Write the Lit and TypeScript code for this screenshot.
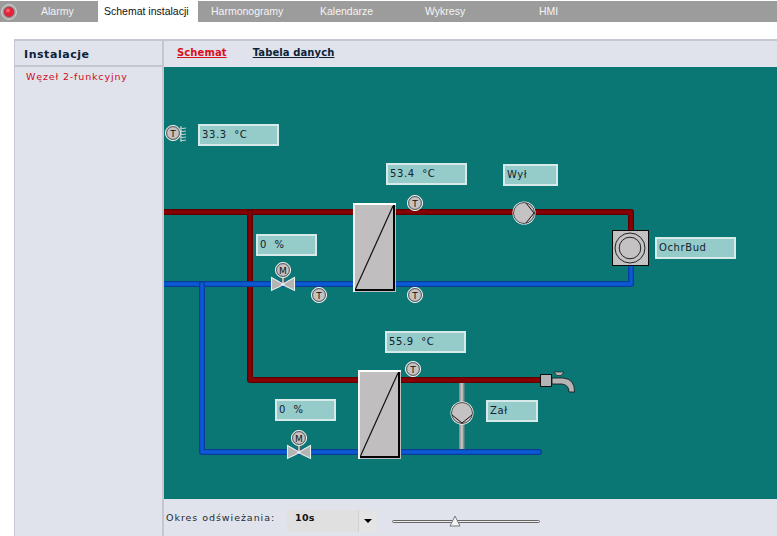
import { LitElement, html, css, svg } from "lit";
import { customElement } from "lit/decorators.js";

const TABS = [
  { t: "Alarmy", w: 68, p: 11 },
  { t: "Schemat instalacji", w: 100, p: 6, active: true },
  { t: "Harmonogramy", w: 109, p: 13 },
  { t: "Kalendarze", w: 105, p: 13 },
  { t: "Wykresy", w: 114, p: 13 },
  { t: "HMI", w: 100, p: 13 },
];
const VALUES = [
  { t: "33.3  °C", x: 198, y: 124, w: 81 },
  { t: "53.4  °C", x: 386, y: 163, w: 81 },
  { t: "Wył", x: 503, y: 164, w: 55 },
  { t: "0  %", x: 256, y: 234, w: 61 },
  { t: "OchrBud", x: 655, y: 237, w: 81 },
  { t: "55.9  °C", x: 385, y: 331, w: 81 },
  { t: "0  %", x: 275, y: 399, w: 61 },
  { t: "Zał", x: 486, y: 400, w: 52 },
];
const OX = 164, OY = 67;

const pipe = (d: string, dark: string, main: string) => svg`
  <path d=${d} fill="none" stroke=${dark} stroke-width="6" stroke-linejoin="round" stroke-linecap="round"/>
  <path d=${d} fill="none" stroke=${main} stroke-width="3.4" stroke-linejoin="round" stroke-linecap="round"/>`;

const badge = (x: number, y: number, l: string) => svg`
  <circle cx=${x} cy=${y} r="7.6" fill="#c4c2c2" stroke="#e8efee" stroke-width="1"/>
  <circle cx=${x} cy=${y} r="6.4" fill="none" stroke="#222" stroke-width="0.7"/>
  <text x=${x} y=${y + 3.5} text-anchor="middle" class="bl">${l}</text>`;

const exchanger = (x: number, y: number) => svg`
  <rect x=${x} y=${y} width="43" height="89" fill="#c0bebe"/>
  <path d="M${x} ${y + 1}H${x + 43}" stroke="#fff" stroke-width="2"/>
  <path d="M${x + 1} ${y}V${y + 89}" stroke="#f2f2f2" stroke-width="2"/>
  <path d="M${x + 41} ${y + 2}V${y + 87}H${x + 2}" fill="none" stroke="#050505" stroke-width="2"/>
  <path d="M${x + 2.5} ${y + 86}L${x + 40} ${y + 3}" stroke="#111" stroke-width="1.2"/>`;

const valve = (x: number, y: number) => svg`
  <rect x=${x - 1.5} y=${y - 8} width="3" height="8" fill="#b4b4b4" stroke="#333" stroke-width="0.5"/>
  <path d="M${x - 11.5} ${y - 6.5}L${x + 1} ${y + 0.5}L${x - 11.5} ${y + 6.5}Z M${x + 11.5} ${y - 6.5}L${x - 1} ${y + 0.5}L${x + 11.5} ${y + 6.5}Z"
    fill="#b4b4b4" stroke="#e6eeee" stroke-width="1.1"/>`;

const pump = (x: number, y: number, down: boolean) => svg`
  <circle cx=${x} cy=${y} r="11.5" fill="#fff"/>
  <circle cx=${x} cy=${y} r="10.5" fill="#c4c2c2" stroke="#222" stroke-width="0.8"/>
  <path d=${down ? `M${x - 10} ${y + 2}L${x} ${y + 10}L${x + 10} ${y + 2}` : `M${x + 2} ${y - 10}L${x + 10} ${y}L${x + 2} ${y + 10}`}
    fill="none" stroke="#111" stroke-width="1"/>`;

@customElement("app-root")
export class AppRoot extends LitElement {
  static styles = css`
    :host { display: block; width: 777px; height: 536px; overflow: hidden; background: #fff; font-family: "DejaVu Sans", Verdana, sans-serif; }
    .tabs { display: flex; height: 21px; margin-top: 1px; background: #9c9c9c; }
    .dot { width: 30px; flex: none; display: flex; align-items: center; padding-left: 1px; box-sizing: border-box; }
    .tab { flex: none; box-sizing: border-box; font: 10.5px/21px "Liberation Sans", Arial, sans-serif; color: #f4f4f4; white-space: nowrap; }
    .tab.active { background: #fff; color: #111; height: 22px; margin-top: -1px; line-height: 23px; }
    .panel { margin: 17px 0 0 14px; height: 497px; box-sizing: border-box; display: grid; grid-template-columns: 149px 1fr; border-top: 2px solid #c5c7d0; border-left: 1px solid #c5c7d0; background: #e0e3ec; }
    .side { border-right: 2px solid #c5c7d0; min-width: 0; }
    .side-head { box-sizing: border-box; border-bottom: 2px solid #c5c7d0; font-size: 11px; font-weight: bold; letter-spacing: 0.55px; color: #0c2238; padding: 7px 0 0 9px; line-height: 14px; height: 26px; }
    .side-item { font-size: 9.5px; letter-spacing: 0.85px; color: #d00a20; padding: 4px 0 0 11px; line-height: 12px; }
    .main { display: flex; flex-direction: column; min-width: 0; }
    .links { height: 26px; box-sizing: border-box; display: flex; gap: 26px; padding: 5px 0 0 13px; }
    .link { font-size: 10px; font-weight: bold; letter-spacing: 0.1px; line-height: 14px; height: 14px; color: #0c2238; text-decoration: underline; }
    .link.on { color: #d9101e; }
    .canvas { position: relative; height: 432px; background: #0b7775; }
    .canvas svg { position: absolute; left: 0; top: 0; }
    .bl { font: 9px "DejaVu Sans", sans-serif; fill: #111; }
    .val { position: absolute; box-sizing: border-box; height: 22px; border: 2px solid #d6ebe9; background: #95cbc8; color: #123; font-size: 10px; letter-spacing: 0.6px; line-height: 18px; padding-left: 2px; white-space: pre; }
    .foot { flex: 1; display: flex; align-items: flex-start; padding: 11px 0 0 2px; font-size: 9.5px; letter-spacing: 0.95px; color: #1d2a33; }
    .flabel { width: 121px; flex: none; line-height: 15px; }
    .select { width: 90px; height: 22px; flex: none; display: flex; background: #e0e0e0; font-weight: bold; font-size: 9.5px; letter-spacing: 0.3px; line-height: 16px; color: #111; box-sizing: border-box; }
    .select span { width: 72px; padding-left: 8px; box-sizing: border-box; border-right: 1px solid #d0d0d0; }
    .select i { flex: 1; display: flex; align-items: center; justify-content: center; background: #e4e4e4; }
    .arrow { width: 0; height: 0; border: 4px solid transparent; border-top: 4px solid #000; border-bottom: 0; }
    .slider { position: relative; width: 148px; height: 3px; margin: 9.5px 0 0 15px; border: 1px solid #666; border-radius: 2px; background: #eee; box-sizing: border-box; }
    .thumb { position: absolute; left: 56px; top: -6px; }
  `;

  render() {
    return html`
      <div class="tabs">
        <div class="dot">
          <svg width="16" height="16" viewBox="0 0 16 16">
            <circle cx="8" cy="8" r="7.4" fill="#a8a0a0" stroke="#d8d8d8"/>
            <circle cx="8" cy="8" r="5" fill="#e8203a" stroke="#7a5050" stroke-width="0.7"/>
            <circle cx="7" cy="6.5" r="2" fill="#f6606a"/>
          </svg>
        </div>
        ${TABS.map((t) => html`<div class="tab ${t.active ? "active" : ""}" style="width:${t.w}px;padding-left:${t.p}px">${t.t}</div>`)}
      </div>
      <div class="panel">
        <div class="side">
          <div class="side-head">Instalacje</div>
          <div class="side-item">Węzeł 2-funkcyjny</div>
        </div>
        <div class="main">
          <div class="links">
            <span class="link on">Schemat</span>
            <span class="link">Tabela danych</span>
          </div>
          <div class="canvas">
            <svg width="613" height="432" viewBox="${OX} ${OY} 613 432">
              ${pipe("M161 212H631V235", "#5e0000", "#880004")}
              ${pipe("M250 212V380H545", "#5e0000", "#880004")}
              ${pipe("M161 284H631V262", "#0a3c98", "#0a5ad8")}
              ${pipe("M202 284V452H539", "#0a3c98", "#0a5ad8")}
              <rect x="459" y="383" width="5.5" height="66" fill="#8e8e8e"/>
              <rect x="460.5" y="383" width="2.4" height="66" fill="#c0c0c0"/>
              ${exchanger(353, 203)} ${exchanger(358, 370)}
              ${badge(415, 203, "T")} ${badge(319, 295, "T")} ${badge(415, 295, "T")} ${badge(413, 369, "T")} ${badge(173, 133, "T")}
              <path d="M180 128q3 1 6 0M180 131q3 1 6 0M180 134q3 1 6 0M180 137q3 1 6 0M180 140q3 1 6 0M181 126V142" fill="none" stroke="#cfe0de" stroke-width="0.9"/>
              ${valve(283, 284)} ${valve(299, 452)}
              ${badge(283, 270, "M")} ${badge(299, 438, "M")}
              ${pump(524, 213, false)} ${pump(462, 413, true)}
              <rect x="612.5" y="230.5" width="36" height="35" fill="#c4c2c2" stroke="#0a0a0a"/>
              <circle cx="630" cy="248" r="15" fill="none" stroke="#111" stroke-width="0.9"/>
              <circle cx="630" cy="248" r="10.8" fill="none" stroke="#111" stroke-width="0.9"/>
              <path d="M552 378H563Q575 379 574.5 392H569Q569 385 562 384H552Z" fill="#b4b4b4" stroke="#111" stroke-width="0.8"/>
              <rect x="540.5" y="374.5" width="11" height="12" fill="#b4b4b4" stroke="#111"/>
              <path d="M554 372H564L561 375.5H557Z" fill="#b4b4b4" stroke="#111" stroke-width="0.6"/>
            </svg>
            ${VALUES.map((v) => html`<div class="val" style="left:${v.x - OX}px;top:${v.y - OY}px;width:${v.w}px">${v.t}</div>`)}
          </div>
          <div class="foot">
            <div class="flabel">Okres odświeżania:</div>
            <div class="select"><span>10s</span><i><b class="arrow"></b></i></div>
            <div class="slider">
              <svg class="thumb" width="12" height="12" viewBox="0 0 12 12"><path d="M6 1L11 11H1Z" fill="#f4f4f4" stroke="#777"/></svg>
            </div>
          </div>
        </div>
      </div>
    `;
  }
}
